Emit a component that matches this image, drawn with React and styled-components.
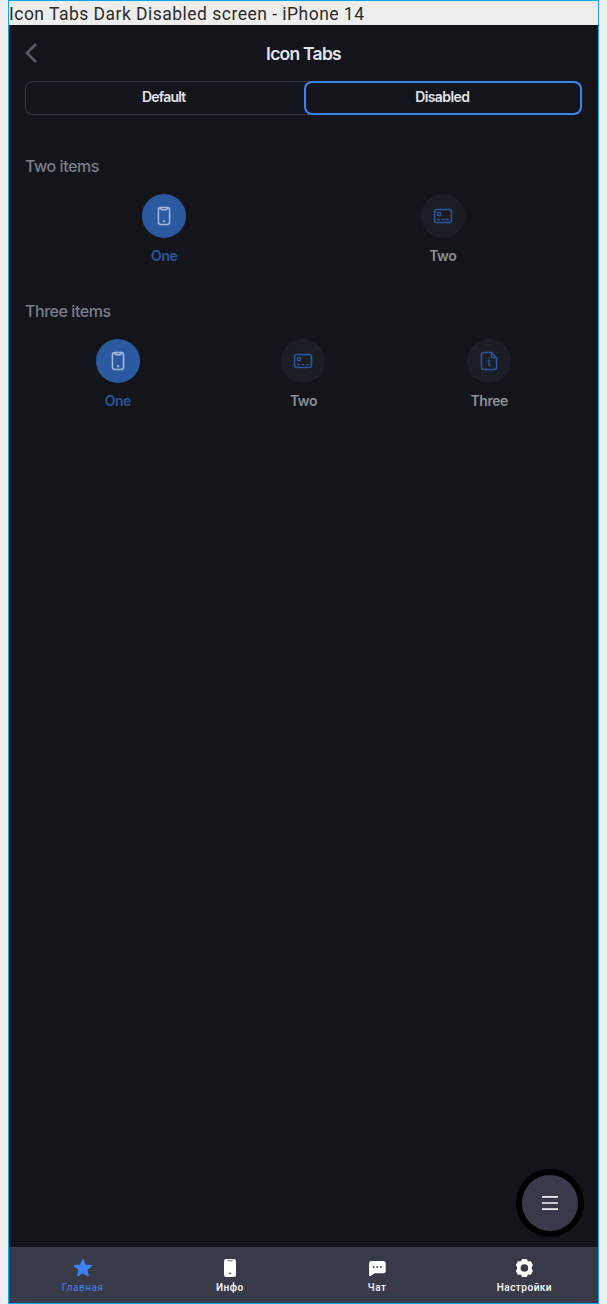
import React from 'react';
import styled, { createGlobalStyle } from 'styled-components';

const GlobalStyle = createGlobalStyle`
  *, *::before, *::after { box-sizing: border-box; }
  body { margin: 0; background: #eeeeee; font-family: Inter, "Liberation Sans", sans-serif; }
  svg { display: block; }
`;

const Frame = styled.div`
  width: 591px;
  height: 1304px;
  margin-left: 8px;
  border: 1px solid #0ba5f2;
  display: flex;
  flex-direction: column;
`;

const Caption = styled.div`
  height: 24px;
  flex: none;
  font: 400 17.5px/26px Roboto, sans-serif;
  letter-spacing: 0.48px;
  color: #2b2b2b;
  white-space: nowrap;
`;

const Screen = styled.main`
  flex: 1;
  min-height: 0;
  display: flex;
  flex-direction: column;
  background: #14151a;
  position: relative;
`;

const Header = styled.header`
  height: 56px;
  padding: 0 16px;
  display: grid;
  grid-template-columns: 24px 1fr 24px;
  align-items: center;
`;

const Title = styled.h1`
  margin: 0;
  text-align: center;
  font-size: 17.5px;
  line-height: 24px;
  padding-top: 2px;
  font-weight: 600;
  letter-spacing: -0.75px;
  color: #e1e4eb;
`;

const Segments = styled.div`
  margin: 0 16px;
  height: 34px;
  display: grid;
  grid-template-columns: 1fr 1fr;
  border-radius: 8px;
  box-shadow: inset 0 0 0 1px #343641;
`;

const Segment = styled.div`
  display: flex;
  align-items: center;
  justify-content: center;
  padding: 0 1px 3px 0;
  border-radius: 8px;
  font-size: 14px;
  font-weight: 600;
  letter-spacing: ${(p) => p.$spacing};
  color: #e1e4eb;
  box-shadow: ${(p) => (p.$active ? 'inset 0 0 0 2px #3c83ef' : 'none')};
`;

const Content = styled.div`
  flex: 1;
  padding: 41px 16px 0;
`;

const Section = styled.section`
  height: 145px;
`;

const SectionTitle = styled.h2`
  margin: 0 0 17px;
  font-size: 16px;
  line-height: 21px;
  font-weight: 500;
  letter-spacing: -0.45px;
  color: #7a7e8d;
`;

const Tabs = styled.div`
  display: grid;
  grid-template-columns: repeat(${(p) => p.$count}, 1fr);
`;

const Tab = styled.div`
  display: flex;
  flex-direction: column;
  align-items: center;
  gap: 8px;
`;

const Circle = styled.div`
  width: 44px;
  height: 44px;
  border-radius: 50%;
  display: grid;
  place-items: center;
  background: ${(p) => (p.$active ? '#2b5aa1' : '#1b1e24')};
  color: ${(p) => (p.$active ? '#a9bbdb' : '#2957a1')};
`;

const TabLabel = styled.span`
  font-size: 14px;
  line-height: 20px;
  font-weight: 600;
  letter-spacing: -0.45px;
  color: ${(p) => (p.$active ? '#2a559b' : '#8d8f93')};
`;

const Fab = styled.div`
  position: absolute;
  right: 14px;
  bottom: 66px;
  width: 68px;
  height: 68px;
  border: 6px solid #000;
  border-radius: 50%;
  background: #383a49;
  display: grid;
  place-items: center;
`;

const NavBar = styled.nav`
  flex: none;
  height: 56px;
  background: #383a49;
  display: grid;
  grid-template-columns: repeat(4, 1fr);
`;

const NavItem = styled.div`
  padding-top: 11px;
  display: flex;
  flex-direction: column;
  align-items: center;
  gap: 3px;
  color: ${(p) => (p.$active ? '#3c83ef' : '#fff')};
`;

const NavLabel = styled.span`
  font: ${(p) => (p.$active ? 400 : 500)} 10px/14px Roboto, sans-serif;
  letter-spacing: 0.5px;
`;

const stroke = {
  fill: 'none',
  stroke: 'currentColor',
  strokeWidth: 1.5,
  strokeLinecap: 'round',
  strokeLinejoin: 'round',
};

const PhoneOutline = () => (
  <svg width="24" height="24" viewBox="0 0 24 24" {...stroke}>
    <rect x="6.4" y="3.6" width="11.2" height="16.8" rx="2.4" />
    <path d="M8.8 4v.4c0 .8.5 1.3 1.3 1.3h3.8c.8 0 1.3-.5 1.3-1.3V4" />
    <circle cx="12" cy="17.3" r=".7" fill="currentColor" strokeWidth="1" />
  </svg>
);

const CardOutline = () => (
  <svg width="24" height="24" viewBox="0 0 24 24" {...stroke}>
    <rect x="3.5" y="5.6" width="17" height="12.8" rx="2.4" />
    <rect x="6.6" y="8.6" width="3" height="3" rx=".3" strokeWidth="1.3" />
    <path d="M6.6 15.6h1.9M10.8 15.6h2.3M15.3 15.6h2.3" strokeWidth="1.3" />
  </svg>
);

const InfoDocument = () => (
  <svg width="24" height="24" viewBox="0 0 24 24" {...stroke}>
    <path d="M14.5 3.6H6.8a2.4 2.4 0 0 0-2.4 2.4v12a2.4 2.4 0 0 0 2.4 2.4h10.4a2.4 2.4 0 0 0 2.4-2.4V8.7z" />
    <path d="M14.5 3.8v3.4c0 .9.6 1.5 1.5 1.5h3.4" />
    <path d="M11.1 11.3h.9v4.5q0 .7 1.2.7M12 8.6v.1" strokeWidth="1.4" />
  </svg>
);

const BackIcon = () => (
  <svg width="24" height="24" viewBox="0 0 24 24" fill="none" stroke="#595d66" strokeWidth="2.5">
    <path d="M11 3 1.9 12l9.1 9" />
  </svg>
);

const StarIcon = () => (
  <svg width="20" height="20" viewBox="0 0 20 20" fill="currentColor" stroke="currentColor" strokeWidth="1.2" strokeLinejoin="round">
    <path d="M9.9 1.6l2.4 5.5 6.1.6-4.6 4.1 1.3 6-5.2-3.1-5.2 3.1 1.3-6L1.4 7.7l6.1-.6z" />
  </svg>
);

const PhoneSolid = () => (
  <svg width="20" height="20" viewBox="0 0 20 20">
    <rect x="4" y="1" width="12" height="18" rx="2.2" fill="#fff" />
    <path d="M7.3 2h5.4v.3c0 .7-.4 1-1 1H8.3c-.6 0-1-.3-1-1z" fill="#898b95" />
    <circle cx="10" cy="15.4" r=".9" fill="#383a49" />
  </svg>
);

const ChatIcon = () => (
  <svg width="20" height="20" viewBox="0 0 20 20">
    <path d="M4.3 3h11.9A2.5 2.5 0 0 1 18.7 5.5v7.2a2.5 2.5 0 0 1-2.5 2.5H7.7L4 17.8c-.9.6-1.9.4-1.9-.8V5.3A2.3 2.3 0 0 1 4.3 3z" fill="#fff" />
    <g fill="#383a49">
      <circle cx="6.7" cy="9" r=".9" />
      <circle cx="10.3" cy="9" r=".9" />
      <circle cx="13.9" cy="9" r=".9" />
    </g>
  </svg>
);

const GearIcon = () => (
  <svg width="20" height="20" viewBox="0 0 20 20" fill="#fff">
    <path fillRule="evenodd" d="M8.7 1h3.4c.7 0 1 .6 1.2 1.3.2.9.9 1.3 1.8 1 .8-.2 1.5-.3 1.9.3l1.7 2.9c.4.7 0 1.2-.5 1.7-.7.7-.7 2.9 0 3.6.5.5.9 1 .5 1.7l-1.7 2.9c-.4.6-1.1.5-1.9.3-.9-.3-1.6.1-1.8 1-.2.7-.5 1.3-1.2 1.3H8.7c-.7 0-1-.6-1.2-1.3-.2-.9-.9-1.3-1.8-1-.8.2-1.5.3-1.9-.3l-1.7-2.9c-.4-.7 0-1.2.5-1.7.7-.7.7-2.9 0-3.6-.5-.5-.9-1-.5-1.7l1.7-2.9c.4-.6 1.1-.5 1.9-.3.9.3 1.6-.1 1.8-1C7.7 1.6 8 1 8.7 1zM10.4 6.2a3.8 3.8 0 1 0 0 7.6 3.8 3.8 0 0 0 0-7.6z" />
  </svg>
);

const MenuIcon = () => (
  <svg width="16" height="16" viewBox="0 0 16 16" stroke="#f1f1f3" strokeWidth="1.7">
    <path d="M0 1.8h16M0 8h16M0 14.2h16" />
  </svg>
);

const items = [
  { label: 'One', Icon: PhoneOutline, active: true },
  { label: 'Two', Icon: CardOutline },
  { label: 'Three', Icon: InfoDocument },
];

const navigation = [
  { label: 'Главная', Icon: StarIcon, active: true },
  { label: 'Инфо', Icon: PhoneSolid },
  { label: 'Чат', Icon: ChatIcon },
  { label: 'Настройки', Icon: GearIcon },
];

function TabSection({ title, count }) {
  return (
    <Section>
      <SectionTitle>{title}</SectionTitle>
      <Tabs $count={count}>
        {items.slice(0, count).map(({ label, Icon, active }) => (
          <Tab key={label}>
            <Circle $active={active}><Icon /></Circle>
            <TabLabel $active={active}>{label}</TabLabel>
          </Tab>
        ))}
      </Tabs>
    </Section>
  );
}

export default function App() {
  return (
    <>
      <GlobalStyle />
      <Frame>
        <Caption>Icon Tabs Dark Disabled screen - iPhone 14</Caption>
        <Screen>
          <Header>
            <BackIcon />
            <Title>Icon Tabs</Title>
          </Header>
          <Segments>
            <Segment $spacing="-0.8px">Default</Segment>
            <Segment $active $spacing="-0.6px">Disabled</Segment>
          </Segments>
          <Content>
            <TabSection title="Two items" count={2} />
            <TabSection title="Three items" count={3} />
          </Content>
          <Fab><MenuIcon /></Fab>
          <NavBar>
            {navigation.map(({ label, Icon, active }) => (
              <NavItem key={label} $active={active}>
                <Icon />
                <NavLabel $active={active}>{label}</NavLabel>
              </NavItem>
            ))}
          </NavBar>
        </Screen>
      </Frame>
    </>
  );
}
